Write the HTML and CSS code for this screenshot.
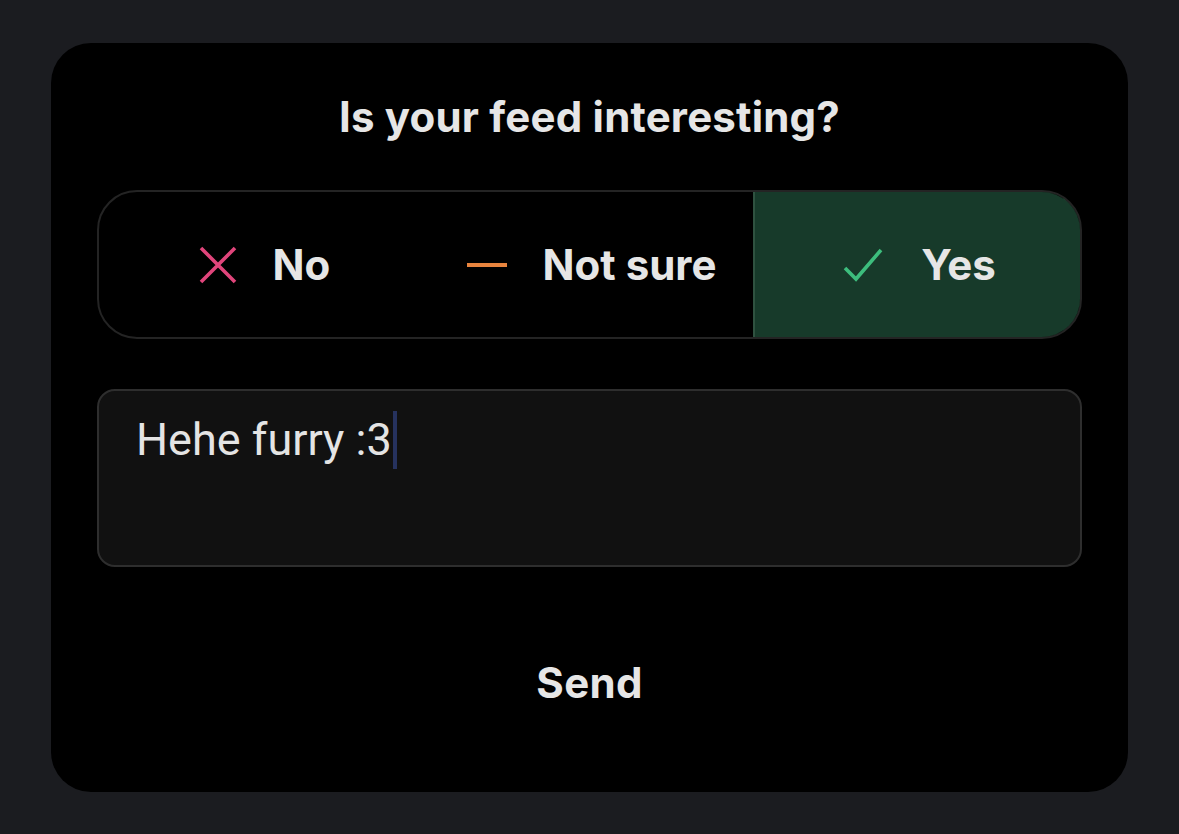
FILE: index.html
```html
<!DOCTYPE html>
<html>
<head>
<meta charset="utf-8">
<link rel="stylesheet" href="styles.css">
</head>
<body>
<div class="card">
  <h1 class="title">Is your feed interesting?</h1>
  <div class="segmented">
    <div class="seg">
      <svg class="icon" width="38" height="38" viewBox="0 0 38 38"><path d="M2 2 L36 36 M36 2 L2 36" stroke="#e0457b" stroke-width="3.6" fill="none"/></svg>
      <span class="seg-label">No</span>
    </div>
    <div class="seg">
      <svg class="icon" width="40" height="38" viewBox="0 0 40 38"><path d="M0 19 H40" stroke="#e8843e" stroke-width="4" fill="none"/></svg>
      <span class="seg-label">Not sure</span>
    </div>
    <div class="seg seg-active">
      <svg class="icon" width="42" height="38" viewBox="0 0 42 38"><path d="M2 22 L13 33 L38 4" stroke="#3dbd7d" stroke-width="3.6" fill="none"/></svg>
      <span class="seg-label">Yes</span>
    </div>
  </div>
  <div class="textbox"><span class="typed">Hehe furry :3</span><span class="caret"></span></div>
  <div class="send">Send</div>
</div>
</body>
</html>
```
FILE: styles.css
```css
html, body {
  margin: 0;
  padding: 0;
  background: #1b1c20;
  width: 1179px;
  height: 834px;
  overflow: hidden;
}
body {
  padding: 43px 51px 42px 51px;
  box-sizing: border-box;
  font-family: Inter, "Noto Sans", sans-serif;
}
.card {
  background: #000;
  border-radius: 40px;
  height: 749px;
  width: 1077px;
  box-sizing: border-box;
  padding: 0 46px 0 46px;
  display: flex;
  flex-direction: column;
  color: #e6e6e6;
}
.title {
  margin: 0;
  padding-top: 48px;
  height: 99px;
  box-sizing: border-box;
  text-align: center;
  font-size: 42px;
  font-weight: 700;
  line-height: 51px;
  letter-spacing: 0.2px;
}
.segmented {
  margin-top: 48px;
  height: 149px;
  border: 2px solid #242424;
  border-radius: 40px;
  box-sizing: border-box;
  display: grid;
  grid-template-columns: 1fr 1fr 1fr;
  overflow: hidden;
}
.seg {
  display: flex;
  align-items: center;
  justify-content: center;
  gap: 36px;
  padding-left: 4px;
}
.seg-active {
  background: #173a2a;
  border: 2px solid #2f5240;
  border-radius: 0 40px 40px 0;
  margin: -2px -2px -2px 0;
}
.seg-label {
  font-size: 42px;
  font-weight: 700;
  letter-spacing: 0px;
}
.icon { display: block; }
.textbox {
  margin-top: 50px;
  height: 178px;
  background: #111111;
  border: 2px solid #2e2e2e;
  border-radius: 18px;
  box-sizing: border-box;
  padding: 20px 37px;
  display: flex;
  align-items: flex-start;
}
.typed {
  font-family: Roboto, "Noto Sans", sans-serif;
  font-size: 45px;
  line-height: 58px;
  color: #e4e4e4;
}
.caret {
  display: inline-block;
  width: 4px;
  height: 58px;
  background: #26325e;
  margin-left: 1px;
}
.send {
  margin-top: 90px;
  text-align: center;
  font-size: 42px;
  font-weight: 700;
  letter-spacing: 0.3px;
}
```
